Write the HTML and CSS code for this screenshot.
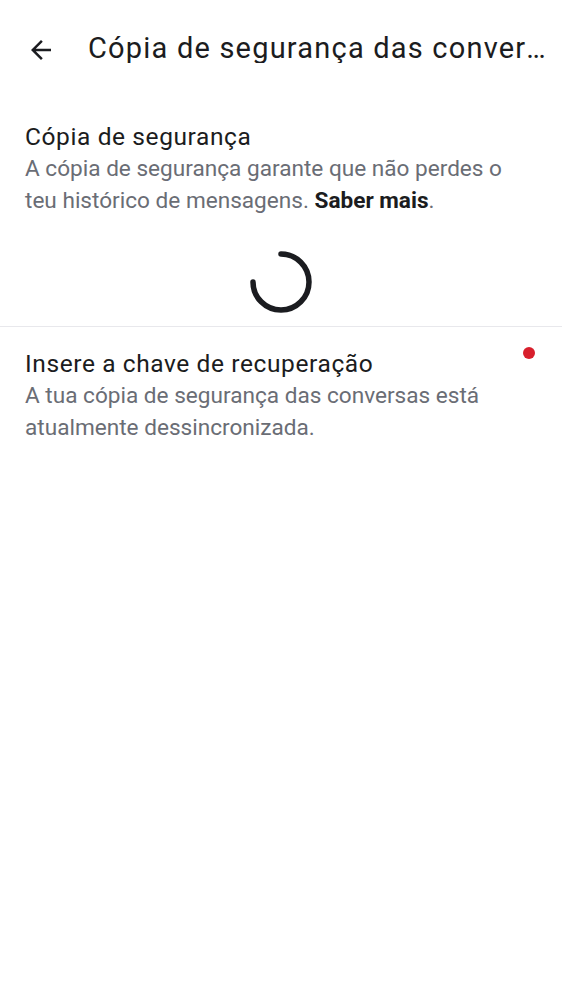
FILE: index.html
```html
<!DOCTYPE html>
<html lang="pt">
<head>
<meta charset="utf-8">
<link rel="stylesheet" href="styles.css">
</head>
<body>
<header class="topbar">
  <button class="back" aria-label="Voltar">
    <svg width="30" height="30" viewBox="0 0 24 24"><path d="M20 11H7.83l5.59-5.59L12 4l-8 8 8 8 1.41-1.41L7.83 13H20v-2z" fill="#1b1c20"/></svg>
  </button>
  <h1 class="title">Cópia de segurança das conversas</h1>
</header>
<section class="item first">
  <div class="item-body">
    <h2 class="item-title">Cópia de segurança</h2>
    <p class="item-text">A cópia de segurança garante que não perdes o teu histórico de mensagens. <b>Saber mais</b>.</p>
  </div>
</section>
<div class="spinner-wrap">
  <svg width="66" height="66" viewBox="0 0 66 66"><path d="M33 5 A28 28 0 1 1 5 33" fill="none" stroke="#1b1c20" stroke-width="5.5" stroke-linecap="round"/></svg>
</div>
<hr class="divider">
<section class="item">
  <div class="item-body">
    <h2 class="item-title">Insere a chave de recuperação</h2>
    <p class="item-text">A tua cópia de segurança das conversas está atualmente dessincronizada.</p>
  </div>
  <span class="dot"></span>
</section>
</body>
</html>
```
FILE: styles.css
```css
html, body { margin: 0; padding: 0; background: #fff; }
body { font-family: Roboto, "Noto Sans", sans-serif; color: #1b1c20; width: 562px; }
.topbar { display: flex; align-items: center; padding: 35px 10px 0 26px; height: 30px; }
.back { border: 0; background: none; padding: 0; width: 30px; height: 30px; display: flex; margin-right: 32px; flex: none; }
.title { margin: 0 0 5px; font-size: 29px; line-height: 30px; font-weight: 400; letter-spacing: 1.2px; white-space: nowrap; overflow: hidden; text-overflow: ellipsis; flex: 1; min-width: 0; }
.item { display: flex; align-items: flex-start; padding: 0 25px; }
.item.first { margin-top: 56px; }
.item-body { flex: 1; max-width: 495px; }
.item-title { margin: 0; font-size: 24.5px; font-weight: 400; line-height: 32px; letter-spacing: 0.6px; }
.item-text { margin: 0; font-size: 22.6px; line-height: 32px; color: #6a6d75; }
.item-text b { color: #1b1c20; font-weight: 700; }
.spinner-wrap { display: flex; justify-content: center; padding: 31.5px 0 0; }
.divider { border: 0; border-top: 1px solid #e8e8ec; margin: 11px 0 21px; }
.dot { width: 12px; height: 12px; border-radius: 50%; background: #d81f2c; margin: -1px 2px 0 auto; flex: none; }
```
